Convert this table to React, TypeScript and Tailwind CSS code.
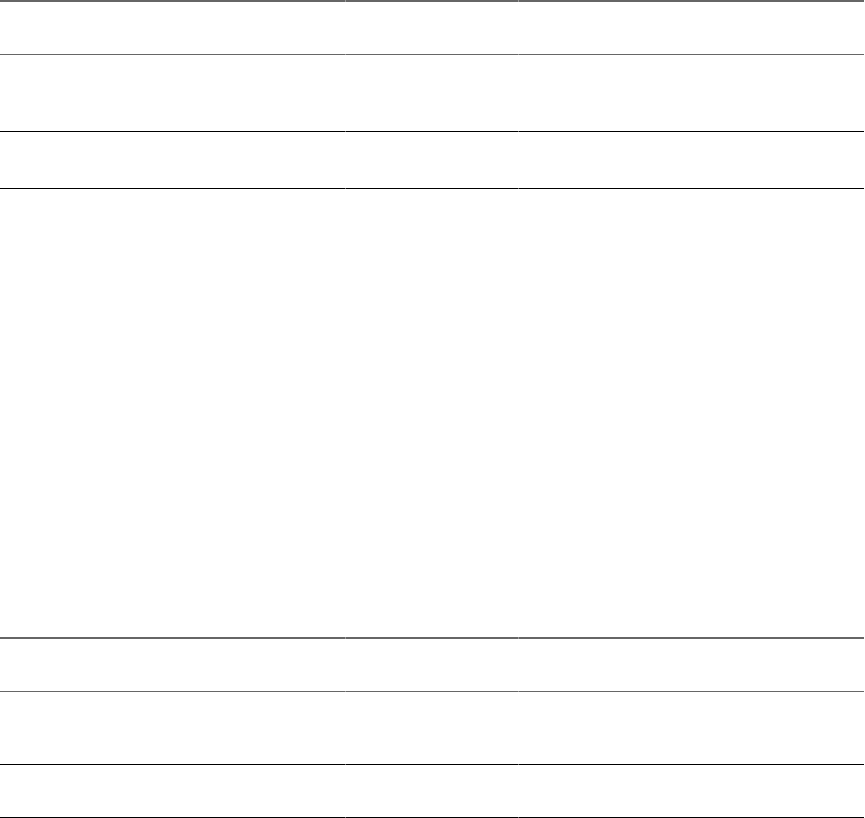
type Rule = { h: string; tone: "gray" | "black" };

function Line({ h, tone }: Rule) {
  const seg = tone === "gray" ? "bg-[#666666]" : "bg-black";
  const gap = tone === "gray" ? "bg-[#9a9a9a]" : "bg-[#6a6a6a]";
  return (
    <div className={`grid grid-cols-[345px_172px_345px] gap-x-px w-[864px] ${h} ${gap}`}>
      <div className={seg} />
      <div className={seg} />
      <div className={seg} />
    </div>
  );
}

function Row({ h }: { h: string }) {
  return (
    <div className={`grid grid-cols-[345px_172px_345px] gap-x-px w-[864px] ${h}`}>
      <div />
      <div />
      <div />
    </div>
  );
}

function Table({ rows }: { rows: string[] }) {
  return (
    <div className="flex flex-col">
      <Line h="h-[2px]" tone="gray" />
      <Row h={rows[0]} />
      <Line h="h-px" tone="gray" />
      <Row h={rows[1]} />
      <Line h="h-px" tone="black" />
      <Row h={rows[2]} />
      <Line h="h-px" tone="black" />
    </div>
  );
}

export default function App() {
  return (
    <div className="w-[865px] h-[818px] bg-white flex flex-col font-['Liberation_Sans',sans-serif]">
      <Table rows={["h-[52px]", "h-[76px]", "h-[56px]"]} />
      <div className="h-[448px]" />
      <Table rows={["h-[52px]", "h-[72px]", "h-[52px]"]} />
    </div>
  );
}
